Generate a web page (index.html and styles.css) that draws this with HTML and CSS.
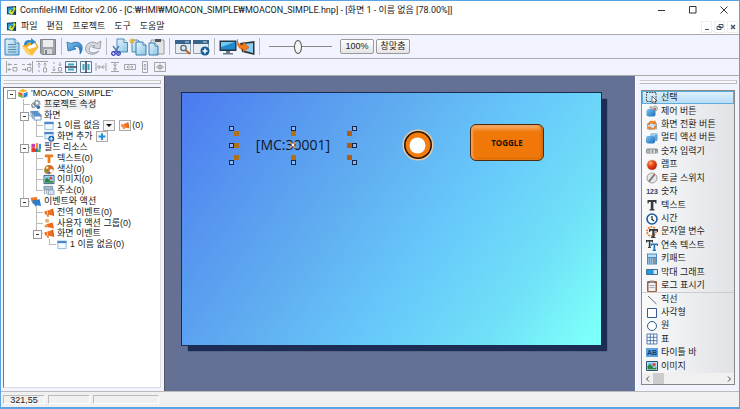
FILE: index.html
```html
<!DOCTYPE html>
<html lang="ko">
<head>
<meta charset="utf-8">
<title>ComfileHMI Editor</title>
<link rel="stylesheet" href="styles.css">
</head>
<body>
<svg class="sprite" aria-hidden="true">
  <defs>
    <linearGradient id="gBlue" x1="0" y1="0" x2="1" y2="1"><stop offset="0" stop-color="#7cc4f2"/><stop offset="1" stop-color="#1c6cb8"/></linearGradient>
    <linearGradient id="gPaper" x1="0" y1="0" x2="1" y2="1"><stop offset="0" stop-color="#e4f4fc"/><stop offset="1" stop-color="#8cc4e4"/></linearGradient>
    <radialGradient id="gRed" cx=".35" cy=".3" r=".8"><stop offset="0" stop-color="#ffb080"/><stop offset=".4" stop-color="#f04818"/><stop offset="1" stop-color="#a81800"/></radialGradient>
  </defs>
  <symbol id="logo" viewBox="0 0 12 12"><path d="M1 2 11 1V11L1 10Z" fill="#173c6c"/><path d="M2 3 9 2.500 6 10 2 9Z" fill="#1f9fd8"/><path d="M9 1.500 10.500 4 7 10.500 3 8.500 4.500 5 6 6.500Z" fill="#d8e428"/><path d="M6 7.500 8 4.500" stroke="#173c6c"/></symbol>
  <symbol id="cube" viewBox="0 0 12 12"><path d="M6 1 11 3 6 5 1 3Z" fill="#f8b828"/><path d="M1 4 5.500 6V11L1 9Z" fill="#ec5a20"/><path d="M11 4 6.500 6V11L11 9Z" fill="#2c8cd8"/><path d="M1 6.500 5.500 8.500V11L1 9Z" fill="#6cc050"/></symbol>
  <symbol id="gears" viewBox="0 0 12 12"><circle cx="7" cy="4.500" r="3" fill="none" stroke="#8a96a4" stroke-width="2" stroke-dasharray="1.500 .8"/><circle cx="7" cy="4.500" r="2.200" fill="none" stroke="#8a96a4"/><circle cx="3.500" cy="7" r="2" fill="none" stroke="#6c7884" stroke-width="2" stroke-dasharray="1.200 .6"/><circle cx="8.500" cy="9" r="2" fill="#2b6dad"/></symbol>
  <symbol id="windows" viewBox="0 0 12 12"><path d="M.5 1.500H8V7H.5Z" fill="#d8e8f4" stroke="#8cacc8"/><path d="M2 3.500H10V9H2Z" fill="#d0e8f8" stroke="#7498c0"/><path d="M4 5.500H11.500V11H4Z" fill="#f4faff" stroke="#6c94c0"/><path d="M0 1H8.500V3H0ZM2 3H10V5H2ZM3.500 5H12V7H3.500Z" fill="#5c90c4"/></symbol>
  <symbol id="window" viewBox="0 0 12 12"><path d="M1.500 2.500H10.500V10.500H1.500Z" fill="#f2faff" stroke="#8cb4dc"/><path d="M1 2H11V4.500H1Z" fill="#4c88c8"/></symbol>
  <symbol id="windowadd" viewBox="0 0 12 12"><path d="M1.500 1.500H10.500V8.500H1.500Z" fill="#e4f2fc" stroke="#8cb4dc"/><path d="M1 1H11V3.500H1Z" fill="#4c88c8"/><circle cx="8.500" cy="8.500" r="3.300" fill="#1c68b0"/><path d="M8.500 6.500V10.500M6.500 8.500H10.500" stroke="#fff"/></symbol>
  <symbol id="blocks" viewBox="0 0 12 12"><path d="M1 2H5V6H1Z" fill="#cc3cb4"/><path d="M6 1H8V7H6Z" fill="#f08420"/><path d="M9 2H11.500V8H9Z" fill="#3890dc"/><path d="M1 6H5V11H1Z" fill="#e83c28"/><path d="M5 7H8V11H5Z" fill="#2870c0"/><path d="M8 8H11V11H8Z" fill="#58a840"/></symbol>
  <symbol id="torange" viewBox="0 0 12 12"><path d="M1.500 1.500H10.500V4.500H7.500V11H4.500V4.500H1.500Z" fill="#f07818"/></symbol>
  <symbol id="palette" viewBox="0 0 12 12"><path d="M6 1C10 1 12 4 11 7S7 11.500 4 11 0 8 1 5 3 1 6 1Z" fill="#c87830"/><circle cx="4" cy="4" r="1.300" fill="#fff0a0"/><circle cx="7.500" cy="3.500" r="1.200" fill="#f05030"/><circle cx="3.500" cy="7.500" r="1.300" fill="#50a040"/><circle cx="8.500" cy="7.500" r="2" fill="#fff"/><circle cx="6" cy="9.500" r="1" fill="#3070d0"/></symbol>
  <symbol id="picture" viewBox="0 0 12 12"><path d="M.5 1.500H11.500V10.500H.5Z" fill="#e4f4ff" stroke="#305078"/><path d="M1.500 2.500H10.500V7H1.500Z" fill="#80c4f4"/><circle cx="8" cy="4.500" r="1.500" fill="#f04020"/><path d="M1.500 9.500V6L4 4 8 8 10.500 7V9.500Z" fill="#2c8840"/></symbol>
  <symbol id="address" viewBox="0 0 12 12"><path d="M.5 1.500H10V5H.5Z" fill="#a4bcd0" stroke="#7890a4"/><path d="M1 5V10M3 5V10M5 5V11M7.500 5V11M10 4V11" stroke="#8ca0b4"/><path d="M5.500 5.500H11.500V10.500H5.500Z" fill="#d4e0ec" stroke="#98acc0"/></symbol>
  <symbol id="horn" viewBox="0 0 12 12"><path d="M1 4.500 4 4 10 2 11 9.500 5.500 8.500 6 10.500H4L3.500 8.500 1.500 8Z" fill="#f07020"/><path d="M10 2 11 9.500" stroke="#b84400"/><path d="M4 4 4.500 8.500" stroke="#ffc890"/></symbol>
  <symbol id="horns" viewBox="0 0 12 12"><path d="M0 2 7 1 8 7 1 6Z" fill="#f07820"/><path d="M2 5 10 3.500 11.500 11 7 10 6 12 4 9 2 8Z" fill="#2c7cc8"/></symbol>
  <symbol id="userhorn" viewBox="0 0 12 12"><circle cx="4" cy="3" r="2.300" fill="#e8b078"/><path d="M1 10C1 6 7 5 7 9V10Z" fill="#e49848"/><path d="M4 6.500 10 5 11.500 11.500 8 10.500 5 10Z" fill="#f06a18"/></symbol>
  <symbol id="plus" viewBox="0 0 12 12"><path d="M6 1.500V10.500M1.500 6H10.500" stroke="#2090e0" stroke-width="2.600"/></symbol>

  <symbol id="select" viewBox="0 0 12 12"><path d="M.5.500H10V9.500H.5Z" fill="none" stroke="#444" stroke-dasharray="1.600 1"/><path d="M6 4V11L7.700 9.500 8.700 12 10 11.500 9 9H11Z" fill="#fff" stroke="#333" stroke-width=".7"/></symbol>
  <symbol id="ctlbtn" viewBox="0 0 12 12"><circle cx="9" cy="3.500" r="2.500" fill="#c8ccd0" stroke="#888" stroke-dasharray="1 .6"/><circle cx="5" cy="2.500" r="1.800" fill="#bbb"/><rect x=".5" y="4" width="9" height="7.500" rx="2" fill="url(#gBlue)"/><circle cx="9" cy="4" r="1" fill="#e83c20"/></symbol>
  <symbol id="swap" viewBox="0 0 12 12"><path d="M1.500 4.500H10.500V10H1.500Z" fill="#cfe2f2" stroke="#7090b0" stroke-width=".7"/><path d="M2 6C2 2 6 1 8 2.500L9 1 10.500 5.500 6 5 7 4C5 3 4 4 4 6Z" fill="#f07818"/><path d="M10.500 6.500C10.500 10 7 11.500 4.500 10L3.500 11.500 1.500 7.500 6 8 5 9C7 10 8.500 9 8.500 6.500Z" fill="#f07818"/></symbol>
  <symbol id="multi" viewBox="0 0 12 12"><rect x="4" y="1" width="8" height="8" rx="2" fill="#9cc8ec"/><rect x="0" y="4" width="9" height="7.500" rx="2" fill="url(#gBlue)"/><path d="M10 3V9" stroke="#3078b8"/></symbol>
  <symbol id="numin" viewBox="0 0 12 12"><rect x="0" y="3.500" width="12" height="5" rx="1.500" fill="#8c9498"/><path d="M2 5V7.500M4 5H5.500V6.200H4.200V7.500H5.700M7 5H8.500V7.500H7M7 6.200H8.500M10 7H11" stroke="#fff" stroke-width=".7" fill="none"/></symbol>
  <symbol id="lamp" viewBox="0 0 12 12"><circle cx="6" cy="6" r="5.500" fill="#d4d4d8"/><circle cx="6" cy="6" r="4.800" fill="url(#gRed)"/></symbol>
  <symbol id="toggle" viewBox="0 0 12 12"><circle cx="6" cy="6" r="5" fill="#e8e8e8" stroke="#a0a0a0"/><path d="M3 9.500 8.500 2.500" stroke="#777" stroke-width="2"/><path d="M7.500 3.500 9 2" stroke="#f05020"/></symbol>
  <symbol id="tserif" viewBox="0 0 12 12"><path d="M1.500 1H10.500V4.500H9.500L9 3H7.400V10L8.500 10.500V11.500H3.500V10.500L4.800 10V3H3L2.500 4.500H1.500Z" fill="#333a40"/></symbol>
  <symbol id="clock" viewBox="0 0 12 12"><circle cx="6" cy="6" r="5" fill="#f8fcff" stroke="#1c5ca0" stroke-width="1.600"/><path d="M6 3V6.500L8 8" fill="none" stroke="#222" stroke-width="1.200"/></symbol>
  <symbol id="tvar" viewBox="0 0 12 12"><circle cx="5.500" cy="5.500" r="4.500" fill="none" stroke="#f07820" stroke-width="1.800" stroke-dasharray="1.800 1"/><path d="M3 3H12V6H11L10.500 4.700H8.500V11H9.500V12H5V11H6.300V4.700H4.500L4 6H3Z" fill="#333a40"/></symbol>
  <symbol id="ttext" viewBox="0 0 12 12"><path d="M0 1H7V3.500H6L5.700 2.500H4.300V8H5V9H2V8H2.800V2.500H1.300L1 3.500H0Z" fill="#333a40"/><path d="M4.500 4.500H12V7H11L10.700 6H9.200V10.800H10V12H6.500V10.800H7.500V6H6L5.700 7H4.500Z" fill="#2474bc"/></symbol>
  <symbol id="keypad" viewBox="0 0 12 12"><path d="M1 .5H11V11.500H1Z" fill="#4c8cc4"/><path d="M2 1.500H10V4H2Z" fill="#bfe0f4"/><path d="M2 6H7.500M2 8H7.500M2 10H7.500" stroke="#d8ecfa" stroke-width="1.200" stroke-dasharray="1.400 .6"/><path d="M9 5.500V10.500" stroke="#f4a040" stroke-width="1.200" stroke-dasharray="1.400 .6"/></symbol>
  <symbol id="bar" viewBox="0 0 12 12"><path d="M.5 3.500H11.500V8.500H.5Z" fill="#d4e8f4" stroke="#406c94"/><path d="M1 4H7.500V8H1Z" fill="#2498dc"/></symbol>
  <symbol id="log" viewBox="0 0 12 12"><rect x="1" y="1" width="10" height="11" rx="1" fill="#9c6444"/><path d="M2.500 3H9.500V11H2.500Z" fill="#f0f0f4"/><path d="M4 .5H8V3H4Z" fill="#8c949c"/><path d="M3.500 5.500H8.500M3.500 7.500H8.500" stroke="#aab"/></symbol>
  <symbol id="line" viewBox="0 0 12 12"><path d="M2 2 10.500 10" stroke="#587088"/></symbol>
  <symbol id="rect" viewBox="0 0 12 12"><path d="M1.500 1.500H10.500V10.500H1.500Z" fill="#fcfdff" stroke="#345c90"/></symbol>
  <symbol id="circle" viewBox="0 0 12 12"><circle cx="6" cy="6" r="4.500" fill="#fcfdff" stroke="#345c80"/></symbol>
  <symbol id="grid" viewBox="0 0 12 12"><path d="M1 1H11V11H1ZM1 4.300H11M1 7.600H11M4.300 1V11M7.600 1V11" fill="#fcfdff" stroke="#4870a8" stroke-width=".9"/></symbol>

  <symbol id="b-new" viewBox="0 0 18 18"><path d="M2 1H12L16 5V17H2Z" fill="url(#gPaper)" stroke="#3c84b4"/><path d="M12 1V5H16" fill="#fff" stroke="#3c84b4"/><path d="M5 6.500H13M5 9H13M5 11.500H13M5 14H13" stroke="#5c8cac"/></symbol>
  <symbol id="b-open" viewBox="0 0 18 18"><path d="M1 8 7 5 14 3 17.500 9 11 17.500 6 16Z" fill="#f4a818"/><path d="M6 9 13.500 5 16 9 11 15Z" fill="#fff"/><path d="M1 8 5 9 11.500 17.500 6 16Z" fill="#ffd468"/><path d="M8 11 16.500 8.500 11.500 17.500Z" fill="#ffc040"/><path d="M3 7C3 3 7 1 10 2.500V0L15 4 10 7V5C8 4 6 5 6 7Z" fill="#2c8cd0"/></symbol>
  <symbol id="b-save" viewBox="0 0 18 18"><path d="M1.500 1.500H16.500V16.500H3L1.500 15Z" fill="#a0a4a8" stroke="#808488"/><path d="M4 2H14V9H4Z" fill="#ececec"/><path d="M5 11H13V16H5Z" fill="#d4d6d8"/><path d="M6 12H8V16H6Z" fill="#808488"/></symbol>
  <symbol id="b-undo" viewBox="0 0 18 18"><path d="M1 4 2 13 10 11 7.500 9C12 7 14.500 10 14 16 19 9 15 1 5 5.500Z" fill="url(#gBlue)" stroke="#1c6498" stroke-width=".7"/></symbol>
  <symbol id="b-redo" viewBox="0 0 18 18"><path d="M17 3 16 11 8.500 9.500 11 8C6 7 4 10 6 14 10 16 13 14 15 13 11 18 3 17 1.500 12 1 5 8 2 13 5.500Z" fill="#d4d8dc" stroke="#8c9094" stroke-width=".8"/></symbol>
  <symbol id="b-cut" viewBox="0 0 18 18"><path d="M6 1H13L16.500 4.500V14H6Z" fill="url(#gPaper)" stroke="#4c8cb8"/><path d="M13 1V4.500H16.500" fill="#fff" stroke="#4c8cb8"/><path d="M2 8 8 16M8 8 3 15" stroke="#5078b0" stroke-width="1.300"/><circle cx="2.500" cy="15.500" r="1.800" fill="none" stroke="#383cc0" stroke-width="1.300"/><circle cx="7.500" cy="15.500" r="1.800" fill="none" stroke="#383cc0" stroke-width="1.300"/></symbol>
  <symbol id="b-copy" viewBox="0 0 18 18"><path d="M3 2H9L12 5V14H3Z" fill="url(#gPaper)" stroke="#4c8cb8"/><path d="M7 4H14L17 7V17H7Z" fill="url(#gPaper)" stroke="#3c7cac"/><path d="M14 4V7H17" fill="#fff" stroke="#3c7cac"/><path d="M3 0V6M0 3H6M1 1 5 5M5 1 1 5" stroke="#ecac28"/></symbol>
  <symbol id="b-paste" viewBox="0 0 18 18"><path d="M4 2H17V16H4Z" fill="#e4e4e4" stroke="#989898"/><path d="M8 1H14V4H8Z" fill="#505458"/><path d="M2 5H8L11 8V17H2Z" fill="url(#gPaper)" stroke="#3c7cac"/><path d="M8 5V8H11" fill="#fff" stroke="#3c7cac"/></symbol>
  <symbol id="b-find" viewBox="0 0 18 18"><path d="M1.500 2.500H16.500V15.500H1.500Z" fill="#e8ecf0" stroke="#90a0b0"/><path d="M1 2H17V6H1Z" fill="#38648c"/><path d="M11 4H15" stroke="#c8e0f4"/><circle cx="9.500" cy="10" r="2.700" fill="#d4ecfc" stroke="#586878" stroke-width="1.300"/><path d="M11.500 12 16 16" stroke="#b86424" stroke-width="2"/></symbol>
  <symbol id="b-add" viewBox="0 0 18 18"><path d="M1.500 2.500H16.500V15.500H1.500Z" fill="#e8ecf0" stroke="#90a0b0"/><path d="M1 2H17V6H1Z" fill="#38648c"/><path d="M11 4H15" stroke="#c8e0f4"/><circle cx="13" cy="13" r="4.500" fill="#185c94"/><path d="M13 10.500V15.500M10.500 13H15.500" stroke="#fff" stroke-width="1.600"/></symbol>
  <symbol id="b-screen" viewBox="0 0 18 18"><path d="M.5 2.500H17.500V13H.5Z" fill="#263848"/><path d="M2 4H16V11.500H2Z" fill="#2088cc"/><path d="M2 4H16L2 9Z" fill="#70c8f4"/><path d="M7 13H11V15H14V16.500H4V15H7Z" fill="#707880"/></symbol>
  <symbol id="b-send" viewBox="0 0 18 18"><path d="M3 5 17.500 3V17L5 14Z" fill="#2c3438"/><path d="M6 6 16 5V15L7 12.500Z" fill="#8cccf0"/><path d="M0 1C1 7 4 7 6 7V4L12 9.500 6 14V11C1 11 0 7 0 1Z" fill="#f47c18" stroke="#c85808" stroke-width=".6"/></symbol>

  <symbol id="a-left" viewBox="0 0 12 12"><path d="M.5 0V12M2 3.500H6M3.500 2 2 3.500 3.500 5M8 3.500H11M2 8.500H5M3.500 7 2 8.500 3.500 10M7 6.500H11V10H7Z"/></symbol>
  <symbol id="a-right" viewBox="0 0 12 12"><path d="M11.500 0V12M6 3.500H10M8.500 2 10 3.500 8.500 5M1 3.500H4M1 8.500H5M4 7 5.500 8.500 4 10M6.500 6.500H10V10H6.500Z"/></symbol>
  <symbol id="a-top" viewBox="0 0 12 12"><path d="M0 .5H12M3 2V7M1.500 3.500 3 2 4.500 3.500M3 9V11M9 2V6M7.500 3.500 9 2 10.500 3.500M7.500 7H10.500V11H7.500Z"/></symbol>
  <symbol id="a-bottom" viewBox="0 0 12 12"><path d="M0 11.500H12M3 5V10M1.500 8.500 3 10 4.500 8.500M3 1V3M9 1V5M7.500 3.500 9 5 10.500 3.500M7.500 6.500H10.500V10H7.500Z"/></symbol>
  <symbol id="a-midh" viewBox="0 0 12 12"><path d="M.5.500H11.500V11.500H.5Z" stroke="#5c7c90"/><path d="M3 3.500H9M3 8.500H9" stroke="#38a8c0" stroke-width="2"/><path d="M0 6H12" stroke="#234" stroke-width="1.400"/></symbol>
  <symbol id="a-midv" viewBox="0 0 12 12"><path d="M.5.500H11.500V11.500H.5Z" stroke="#5c7c90"/><path d="M3.500 3V9M8.500 3V9" stroke="#38a8c0" stroke-width="2"/><path d="M6 0V12" stroke="#234" stroke-width="1.400"/></symbol>
  <symbol id="a-gaph" viewBox="0 0 12 12"><path d="M1 2V10M11 2V10M2 6H10M3.500 4 5 6 3.500 8M8.500 4 7 6 8.500 8"/></symbol>
  <symbol id="a-gapv" viewBox="0 0 12 12"><path d="M2 1.500H10M2 10.500H10M6 2V10M4 3.500 6 5 8 3.500M4 8.500 6 7 8 8.500"/></symbol>
  <symbol id="a-sameh" viewBox="0 0 12 12"><path d="M.5 3.500H11.500V8.500H.5ZM3 6H9M4.500 4.500 3 6 4.500 7.500M7.500 4.500 9 6 7.500 7.500"/></symbol>
  <symbol id="a-samev" viewBox="0 0 12 12"><path d="M3.500.500H8.500V11.500H3.500ZM6 3V9M4.500 4.500 6 3 7.500 4.500M4.500 7.500 6 9 7.500 7.500"/></symbol>
  <symbol id="a-same" viewBox="0 0 12 12"><path d="M.5 1.500H11.500V10.500H.5ZM2 6H10M6 2.500V9.500M4 4.500H8V7.500H4Z"/></symbol>
</svg>

<div class="app">
  <header class="titlebar">
    <svg class="logo"><use href="#logo"/></svg>
    <h1>ComfileHMI Editor v2.06 - [C:₩HMI₩MOACON_SIMPLE₩MOACON_SIMPLE.hnp] - [화면 1 - 이름 없음 [78.00%]]</h1>
    <div class="winbtns">
      <button aria-label="최소화"><svg viewBox="0 0 8 8"><path d="M0 4.500H7"/></svg></button>
      <button aria-label="최대화"><svg viewBox="0 0 8 8"><path d="M.5.500H7V7H.5Z"/></svg></button>
      <button aria-label="닫기"><svg viewBox="0 0 8 8"><path d="M.5.500 7.500 7.500M7.500.500.5 7.500"/></svg></button>
    </div>
  </header>
  <nav class="menubar">
    <svg class="logo"><use href="#logo"/></svg>
    <button>파일</button><button>편집</button><button>프로젝트</button><button>도구</button><button>도움말</button>
    <div class="mdibtns">
      <button aria-label="창 최소화"><svg viewBox="0 0 8 8"><path d="M2 6.500H6"/></svg></button>
      <button aria-label="창 복원"><svg viewBox="0 0 8 8"><path d="M3 1.500H7V4.500H3ZM1 3.500H5V6.500H1Z"/></svg></button>
      <button aria-label="창 닫기"><svg viewBox="0 0 8 8"><path d="M2 2 6 6M6 2 2 6" stroke-width="1.500"/></svg></button>
    </div>
  </nav>
  <div class="toolbar">
    <button aria-label="새로 만들기"><svg><use href="#b-new"/></svg></button>
    <button aria-label="열기"><svg><use href="#b-open"/></svg></button>
    <button aria-label="저장"><svg><use href="#b-save"/></svg></button>
    <span class="sep"></span>
    <button aria-label="실행 취소"><svg><use href="#b-undo"/></svg></button>
    <button aria-label="다시 실행"><svg><use href="#b-redo"/></svg></button>
    <span class="sep"></span>
    <button aria-label="잘라내기"><svg><use href="#b-cut"/></svg></button>
    <button aria-label="복사"><svg><use href="#b-copy"/></svg></button>
    <button aria-label="붙여넣기"><svg><use href="#b-paste"/></svg></button>
    <span class="sep"></span>
    <button aria-label="찾기"><svg><use href="#b-find"/></svg></button>
    <button aria-label="화면 추가"><svg><use href="#b-add"/></svg></button>
    <span class="sep"></span>
    <button aria-label="시뮬레이션"><svg><use href="#b-screen"/></svg></button>
    <button aria-label="전송"><svg><use href="#b-send"/></svg></button>
    <span class="sep"></span>
    <input class="zoom" type="range" min="0" max="100" value="46" aria-label="확대 비율">
    <button class="push">100%</button>
    <button class="push">창맞춤</button>
  </div>
  <div class="alignbar">
    <div class="aligns">
      <button aria-label="왼쪽 맞춤"><svg><use href="#a-left"/></svg></button>
      <button aria-label="오른쪽 맞춤"><svg><use href="#a-right"/></svg></button>
      <button aria-label="위쪽 맞춤"><svg><use href="#a-top"/></svg></button>
      <button aria-label="아래쪽 맞춤"><svg><use href="#a-bottom"/></svg></button>
      <button aria-label="세로 가운데"><svg><use href="#a-midh"/></svg></button>
      <button aria-label="가로 가운데"><svg><use href="#a-midv"/></svg></button>
      <button aria-label="가로 간격"><svg><use href="#a-gaph"/></svg></button>
      <button aria-label="세로 간격"><svg><use href="#a-gapv"/></svg></button>
      <button aria-label="같은 너비"><svg><use href="#a-sameh"/></svg></button>
      <button aria-label="같은 높이"><svg><use href="#a-samev"/></svg></button>
      <button aria-label="같은 크기"><svg><use href="#a-same"/></svg></button>
    </div>
  </div>

  <main class="work">
    <aside class="side left">
      <div class="grip"></div>
      <div class="treebox">
        <ul class="tree">
          <li><i class="box"></i><svg><use href="#cube"/></svg><span>'MOACON_SIMPLE'</span></li>
          <li><i></i><i class="tee"></i><svg><use href="#gears"/></svg><span class="dim">프로젝트 속성</span></li>
          <li><i></i><i class="tee box"></i><svg><use href="#windows"/></svg><span>화면</span></li>
          <li><i></i><i class="bar"></i><i class="tee"></i><svg><use href="#window"/></svg><span>1 이름 없음</span><button class="mini drop" aria-label="화면 메뉴"></button><button class="mini" aria-label="화면 액션"><svg><use href="#horn"/></svg></button><span>(0)</span></li>
          <li><i></i><i class="bar"></i><i class="end"></i><svg><use href="#windowadd"/></svg><span>화면 추가</span><button class="mini" aria-label="추가"><svg><use href="#plus"/></svg></button></li>
          <li><i></i><i class="tee box"></i><svg><use href="#blocks"/></svg><span>필드 리소스</span></li>
          <li><i></i><i class="bar"></i><i class="tee"></i><svg><use href="#torange"/></svg><span>텍스트(0)</span></li>
          <li><i></i><i class="bar"></i><i class="tee"></i><svg><use href="#palette"/></svg><span>색상(0)</span></li>
          <li><i></i><i class="bar"></i><i class="tee"></i><svg><use href="#picture"/></svg><span>이미지(0)</span></li>
          <li><i></i><i class="bar"></i><i class="end"></i><svg><use href="#address"/></svg><span>주소(0)</span></li>
          <li><i></i><i class="end box"></i><svg><use href="#horns"/></svg><span>이벤트와 액션</span></li>
          <li><i></i><i></i><i class="tee"></i><svg><use href="#horn"/></svg><span>전역 이벤트(0)</span></li>
          <li><i></i><i></i><i class="tee"></i><svg><use href="#userhorn"/></svg><span>사용자 액션 그룹(0)</span></li>
          <li><i></i><i></i><i class="end box"></i><svg><use href="#horn"/></svg><span>화면 이벤트</span></li>
          <li><i></i><i></i><i></i><i class="end"></i><svg><use href="#window"/></svg><span>1 이름 없음(0)</span></li>
        </ul>
      </div>
    </aside>

    <section class="canvas">
      <div class="artboard">
        <div class="field">
          [MC:30001]
          <i class="h h1"></i><i class="h h2"></i><i class="h h3"></i><i class="h h4"></i><i class="h h5"></i><i class="h h6"></i><i class="h h7"></i><i class="h h8"></i>
          <i class="o o1"></i><i class="o o2"></i><i class="o o3"></i><i class="o o4"></i><i class="o o5"></i><i class="o o6"></i><i class="o o7"></i><i class="o o8"></i>
          <svg class="cross" viewBox="0 0 8 8"><path d="M1 1 7 7M7 1 1 7" stroke="#f0a040" stroke-width="1.400"/><path d="M3 3 5 5M5 3 3 5" stroke="#fff"/></svg>
        </div>
        <svg class="ring" viewBox="0 0 32 32"><circle cx="16" cy="16" r="15.500" fill="#e8c8a4"/><circle cx="16" cy="16" r="13.200" fill="#f47c0c" stroke="#281808" stroke-width="1.600"/><circle cx="15.500" cy="16.500" r="8" fill="#fcfffc"/></svg>
        <button class="togglebtn">TOGGLE</button>
      </div>
    </section>

    <aside class="side right">
      <div class="grip"></div>
      <div class="listbox">
        <ul class="tools">
          <li class="on"><svg><use href="#select"/></svg>선택</li>
          <li><svg><use href="#ctlbtn"/></svg>제어 버튼</li>
          <li><svg><use href="#swap"/></svg>화면 전환 버튼</li>
          <li><svg><use href="#multi"/></svg>멀티 액션 버튼</li>
          <li><svg><use href="#numin"/></svg>숫자 입력기</li>
          <li><svg><use href="#lamp"/></svg>램프</li>
          <li><svg><use href="#toggle"/></svg>토글 스위치</li>
          <li><b class="num">123</b>숫자</li>
          <li><svg><use href="#tserif"/></svg>텍스트</li>
          <li><svg><use href="#clock"/></svg>시간</li>
          <li><svg><use href="#tvar"/></svg>문자열 변수</li>
          <li><svg><use href="#ttext"/></svg>연속 텍스트</li>
          <li><svg><use href="#keypad"/></svg>키패드</li>
          <li><svg><use href="#bar"/></svg>막대 그래프</li>
          <li><svg><use href="#log"/></svg>로그 표시기</li>
          <li class="group"><svg><use href="#line"/></svg>직선</li>
          <li><svg><use href="#rect"/></svg>사각형</li>
          <li><svg><use href="#circle"/></svg>원</li>
          <li><svg><use href="#grid"/></svg>표</li>
          <li><b class="ab">AB</b>타이틀 바</li>
          <li><svg><use href="#picture"/></svg>이미지</li>
        </ul>
        <div class="hscroll">
          <button aria-label="왼쪽으로"><svg viewBox="0 0 8 8"><path d="M5 1.500 2.500 4 5 6.500"/></svg></button>
          <span class="thumb"></span>
          <button aria-label="오른쪽으로"><svg viewBox="0 0 8 8"><path d="M3 1.500 5.500 4 3 6.500"/></svg></button>
        </div>
      </div>
    </aside>
  </main>

  <footer class="status">
    <span class="cell">321,55</span><span class="cell"></span><span class="cell wide"></span>
  </footer>
</div>
</body>
</html>
```
FILE: styles.css
```css
* { box-sizing: border-box; }
body {
  margin: 0;
  font: 9px/11px "Liberation Sans", "Noto Sans CJK KR", sans-serif;
  color: #222;
}
button {
  font: inherit;
  color: inherit;
  padding: 0;
  border: 0;
  background: none;
  display: flex;
  align-items: center;
  justify-content: center;
}
ul { list-style: none; margin: 0; padding: 0; }
svg { display: block; flex: none; fill: none; }
.sprite { position: absolute; width: 0; height: 0; }

.app {
  height: 100vh;
  display: flex;
  flex-direction: column;
  border: 1px solid #5ba3e0;
  border-bottom-width: 2px;
  background: #f0f0f0;
}

.titlebar, .menubar {
  display: flex;
  align-items: center;
  background: #fff;
  padding-left: 5px;
}
.titlebar { height: 18px; }
.logo { width: 11px; height: 11px; }
h1 {
  margin: 0 0 0 3px;
  flex: 1;
  font: 9px/12px Roboto, "Noto Sans CJK KR", sans-serif;
  white-space: nowrap;
}
.winbtns { display: flex; gap: 23px; padding-right: 11px; }
.winbtns svg { width: 8px; height: 8px; stroke: #333; }
.menubar { height: 15px; gap: 9px; }
.menubar .logo { margin-right: -5px; }
.mdibtns { display: flex; gap: 2px; margin-left: auto; padding-right: 1px; }
.mdibtns button { width: 11px; height: 12px; border: 1px solid #eee; }
.mdibtns svg { width: 8px; height: 8px; stroke: #456; }

.toolbar, .alignbar {
  display: flex;
  align-items: center;
  background: #f1f4fe;
  border-top: 1px solid #aaa;
}
.toolbar { height: 24px; padding-left: 2px; }
.toolbar svg { width: 18px; height: 18px; }
.sep { width: 1px; height: 17px; margin: 0 4px; background: #bbb; }
.zoom {
  appearance: none;
  width: 63px;
  height: 16px;
  margin: 0 8px 0 5px;
  background: linear-gradient(#888, #888) center / 100% 1px no-repeat;
}
.zoom::-webkit-slider-thumb {
  appearance: none;
  width: 8px;
  height: 14px;
  border: 1px solid #555;
  border-radius: 50%;
  background: #f4f4f4;
}
.push {
  width: 34px;
  height: 15px;
  margin-right: 2px;
  border: 1px solid #999;
  border-radius: 2px;
  background: linear-gradient(#fff, #e4e4e4);
}
.alignbar { height: 18px; border-bottom: 1px solid #aaa; }
.aligns { width: 162px; margin-left: 4px; display: grid; grid-template-columns: repeat(11, 1fr); }
.aligns svg { width: 12px; height: 12px; stroke: #a4a4a4; }

.work { flex: 1; min-height: 0; display: flex; }
.side { display: flex; flex-direction: column; background: #f1f4fe; }
.left { width: 163px; padding: 4px 3px 3px 2px; }
.right { width: 104px; padding: 4px 4px 6px 5px; border-left: 1px solid #fff; }
.grip {
  height: 4px;
  border: 1px solid #bbb;
  border-left-color: #fff;
  border-top-color: #ccc;
  background: #f8f8fc;
}
.right .grip { margin: 0 -2px; }
.treebox {
  flex: 1;
  margin-top: 3px;
  border: 1px solid #ddd;
  border-left-color: #777;
  border-top-color: #777;
  background: #fff;
}
.tree {
  height: 162px;
  display: grid;
  grid-template-rows: repeat(15, 1fr);
}
.tree li { display: flex; align-items: center; min-height: 0; white-space: nowrap; }
.tree li > svg { width: 12px; height: 11px; margin-right: 2px; z-index: 1; }
.tree i { position: relative; width: 13px; align-self: stretch; flex: none; }
.bar { background: linear-gradient(#bbb, #bbb) 6px 0 / 1px 100% no-repeat; }
.tee {
  background:
    linear-gradient(#bbb, #bbb) 6px 0 / 1px 100% no-repeat,
    linear-gradient(#bbb, #bbb) 6px 5px / 7px 1px no-repeat;
}
.end {
  background:
    linear-gradient(#bbb, #bbb) 6px 0 / 1px 5px no-repeat,
    linear-gradient(#bbb, #bbb) 6px 5px / 7px 1px no-repeat;
}
.box::before {
  content: "";
  position: absolute;
  left: 3px;
  top: 2px;
  width: 7px;
  height: 7px;
  border: 1px solid #999;
  background: linear-gradient(#333, #333) center / 3px 1px no-repeat #fff;
}
.dim { background: #f0f0f0; }
.mini {
  width: 12px;
  height: 11px;
  margin: 0 1px 0 3px;
  border: 1px solid #aaa;
  background: #f6f6f6;
}
.mini svg { width: 10px; height: 9px; }
.drop::before {
  content: "";
  border: 3px solid transparent;
  border-top-color: #111;
  border-bottom: 0;
}

.canvas { flex: 1; display: flex; padding: 16px 33px 45px 16px; background: #647194; border-left: 1px solid #556; }
.artboard {
  position: relative;
  flex: 1;
  border: 1px solid #1c2c50;
  background: linear-gradient(125deg, #4c7af0 0%, #5694f0 18%, #60acf0 38%, #66c6fa 58%, #70e0f8 80%, #7cfffa 97%);
  box-shadow: 6px 6px 1px -1px #1c2c54;
}
.field {
  position: absolute;
  left: 46px;
  top: 33px;
  width: 130px;
  height: 39px;
  font: 14px/37px "Open Sans", sans-serif;
  text-align: center;
  color: #10182c;
}
.h, .o { position: absolute; width: 5px; height: 5px; }
.h { border: 1px solid #14284c; background: #8cb8f8; }
.o { background: #b07018; }
.h1, .h4, .h6 { left: 1px; }
.h2, .h7 { left: 63px; }
.h3, .h5, .h8 { right: 1px; }
.h1, .h2, .h3 { top: 0; }
.h4, .h5 { top: 17px; }
.h6, .h7, .h8 { bottom: 0; }
.o1, .o4, .o6 { left: 6px; }
.o2, .o7 { left: 63px; }
.o3, .o5, .o8 { right: 6px; }
.o1, .o2, .o3 { top: 5px; }
.o4, .o5 { top: 17px; }
.o6, .o7, .o8 { bottom: 5px; }
.o3, .o5, .o8 { background: #b05c14; }
.cross { position: absolute; left: 61px; top: 15px; width: 8px; height: 8px; }
.ring { position: absolute; left: 220px; top: 36px; width: 32px; height: 32px; }
.togglebtn {
  position: absolute;
  left: 288px;
  top: 31px;
  width: 74px;
  height: 37px;
  border: 1px solid #4c2c10;
  border-radius: 6px;
  background: linear-gradient(#fcb478, #f07808 20%, #f07808 90%, #d86800);
  box-shadow: inset 2px 0 2px #f8a050, inset -2px 0 2px #d86c08;
  font: bold 8px/12px "Open Sans", sans-serif;
  color: #201408;
}

.listbox {
  flex: 1;
  display: flex;
  flex-direction: column;
  margin-top: 6px;
  border: 1px solid #888;
  background: linear-gradient(90deg, #fafafa, #e0e2e6);
}
.tools { flex: 1; display: grid; grid-template-rows: repeat(21, 1fr); }
.tools li { display: flex; align-items: center; gap: 3px; padding-left: 4px; min-height: 0; white-space: nowrap; }
.tools svg { width: 12px; height: 12px; }
.tools .on { background: linear-gradient(#e0f2fd, #b4dcf6); box-shadow: inset 0 0 0 1px #5cacdc; }
.group { border-top: 1px solid #ccc; }
.num, .ab { width: 12px; font-size: 7px; line-height: 9px; color: #243c70; display: flex; justify-content: center; }
.ab { background: #5ca4dc; color: #103c70; }
.hscroll { height: 11px; display: flex; background: #f0f0f0; }
.hscroll button { width: 11px; }
.hscroll button:last-child { margin-left: auto; }
.hscroll svg { width: 8px; height: 8px; stroke: #444; }
.thumb { width: 11px; background: #ccc; }

.status { height: 16px; display: flex; gap: 3px; padding: 3px 2px; border-top: 1px solid #bbb; }
.cell {
  width: 42px;
  border: 1px solid #bbb;
  border-right-color: #fff;
  border-bottom-color: #fff;
  line-height: 8px;
  text-align: center;
}
.wide { width: 66px; }
```
